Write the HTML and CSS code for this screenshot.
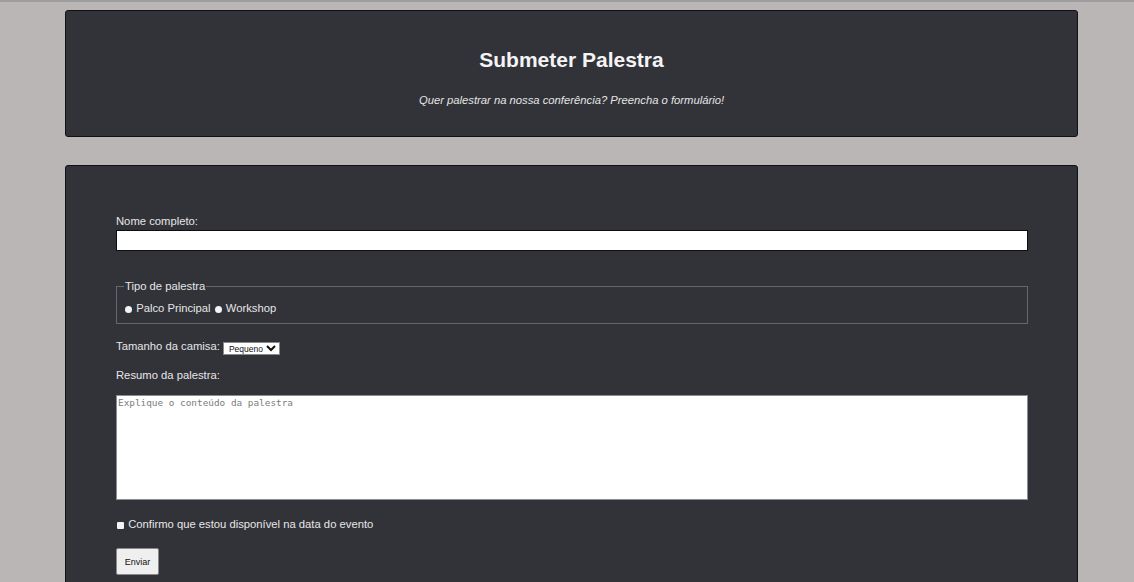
FILE: index.html
```html
<!DOCTYPE html>
<html lang="pt-BR">
<head>
<meta charset="utf-8">
<title>Submeter Palestra</title>
<link rel="stylesheet" href="styles.css">
</head>
<body>
<header class="card header-card">
  <h1 class="title">Submeter Palestra</h1>
  <p class="subtitle">Quer palestrar na nossa conferência? Preencha o formulário!</p>
</header>
<main class="card form-card">
  <form class="talk-form">
    <label class="field-label" for="nome">Nome completo:</label>
    <input class="text-input" type="text" id="nome">

    <fieldset class="type-set">
      <legend class="type-legend">Tipo de palestra</legend>
      <div class="radio-row">
        <label class="radio-label"><input class="radio" type="radio" name="tipo"> Palco Principal</label>
        <label class="radio-label"><input class="radio" type="radio" name="tipo"> Workshop</label>
      </div>
    </fieldset>

    <div class="shirt-row">
      <label for="camisa">Tamanho da camisa:</label>
      <select class="shirt-select" id="camisa">
        <option>Pequeno</option>
        <option>Médio</option>
        <option>Grande</option>
      </select>
    </div>

    <label class="field-label summary-label" for="resumo">Resumo da palestra:</label>
    <textarea class="summary" id="resumo" placeholder="Explique o conteúdo da palestra"></textarea>

    <label class="check-row"><input class="check" type="checkbox"> Confirmo que estou disponível na data do evento</label>

    <button class="submit" type="submit">Enviar</button>
  </form>
</main>
</body>
</html>
```
FILE: styles.css
```css
html, body {
  margin: 0;
  padding: 0;
}

body {
  background: #bab6b5;
  border-top: 2px solid #9e9c9c;
  font-family: "Liberation Sans", Arial, sans-serif;
  font-size: 11.25px;
  line-height: 14px;
  color: #e6e6e8;
}

.card {
  background: #323338;
  border: 1px solid #111113;
  border-radius: 3px;
}

.header-card {
  margin: 8px 56px 0 65px;
  padding: 37px 0 29px;
  text-align: center;
}

.title {
  margin: 0;
  font-size: 21px;
  line-height: 24px;
  font-weight: bold;
  color: #f4f4f6;
}

.subtitle {
  margin: 21px 0 0;
  font-style: italic;
  font-size: 11.25px;
  line-height: 14px;
  color: #e4e4e6;
}

.form-card {
  margin: 28px 56px 0 65px;
  padding: 48px 49px 40px 50px;
}

.talk-form {
  display: flex;
  flex-direction: column;
  align-items: flex-start;
}

.field-label {
  display: block;
}

.text-input {
  display: block;
  box-sizing: border-box;
  width: 100%;
  height: 21px;
  margin: 2px 0 0;
  border: 1px solid #0d0d0f;
  background: #fff;
  padding: 0 2px;
}

.type-set {
  align-self: stretch;
  margin: 28px 0 0;
  padding: 8px 7px 8px;
  border: 1px solid #66666c;
  min-width: 0;
}

.type-legend {
  padding: 0 1px;
  line-height: 14px;
}

.radio-row {
  line-height: 14px;
}

.radio {
  appearance: none;
  -webkit-appearance: none;
  width: 7px;
  height: 7px;
  margin: 0 1px 0 1px;
  border-radius: 50%;
  background: #f4f4f4;
  vertical-align: -0.5px;
}

.shirt-row {
  margin-top: 15px;
  line-height: 14px;
}

.shirt-select {
  box-sizing: border-box;
  height: 13px;
  width: 57px;
  margin: 0;
  padding: 0 0 0 1px;
  font-family: "Liberation Sans", Arial, sans-serif;
  font-size: 8.5px;
  border: 1px solid #8a8a8a;
  border-radius: 0;
  background: #fff;
  color: #111;
  vertical-align: -2px;
}

.summary-label {
  margin-top: 13px;
}

.summary {
  display: block;
  box-sizing: border-box;
  width: 100%;
  height: 105px;
  margin: 13px 0 0;
  padding: 1px 1px;
  border: 1px solid #8d8d8f;
  background: #fff;
  font-family: "DejaVu Sans Mono", monospace;
  font-size: 9.4px;
  resize: none;
}

.summary::placeholder {
  color: #7c7c7c;
}

.check-row {
  margin-top: 17px;
  line-height: 14px;
}

.check {
  appearance: none;
  -webkit-appearance: none;
  width: 7px;
  height: 7px;
  margin: 0 1px 0 1px;
  border-radius: 1px;
  background: #f4f4f4;
  vertical-align: -0.5px;
}

.submit {
  margin-top: 17px;
  box-sizing: border-box;
  width: 43px;
  height: 27px;
  padding: 0;
  font-family: "Liberation Sans", Arial, sans-serif;
  font-size: 9px;
  color: #111;
  background: #efefef;
  border: 1px solid #8a8a8a;
  border-radius: 2px;
}
```
